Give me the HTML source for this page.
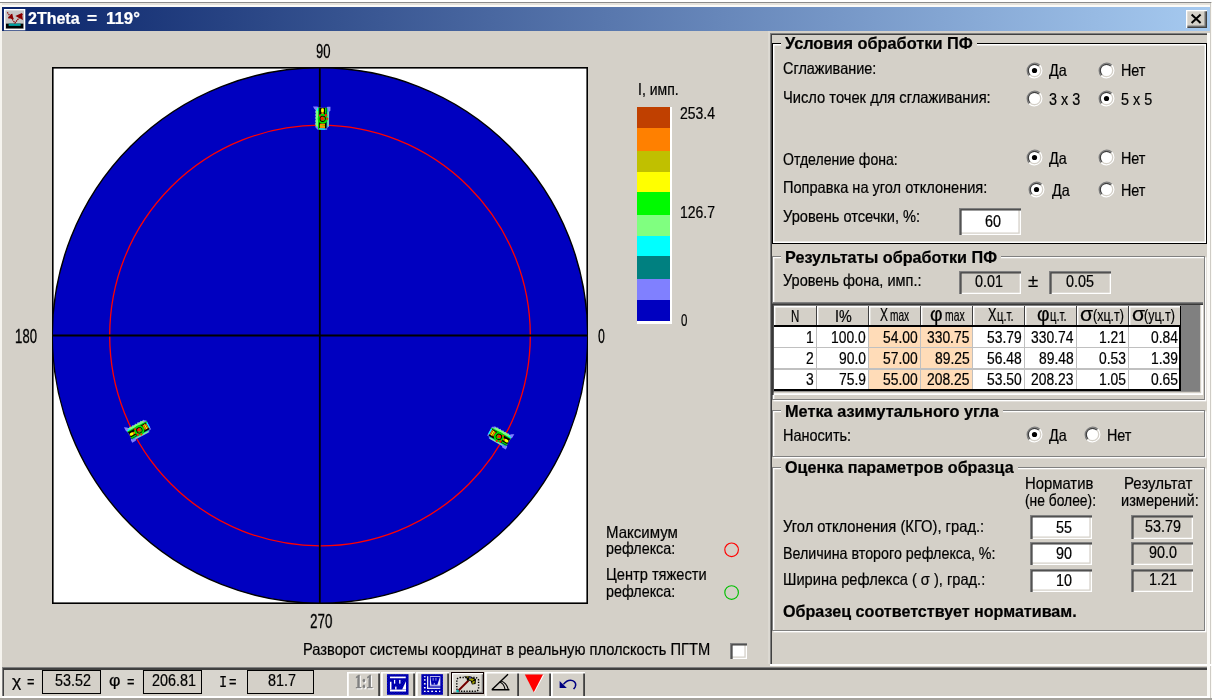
<!DOCTYPE html>
<html><head><meta charset="utf-8"><title>2Theta</title>
<style>
html,body{margin:0;padding:0}
body{width:1212px;height:700px;overflow:hidden;background:#d4d0c8;position:relative;font-family:"Liberation Sans",sans-serif}
.t{position:absolute;white-space:pre;line-height:1;transform-origin:0 0;display:block;-webkit-text-stroke-width:0.22px}
svg{position:absolute;overflow:visible}
#w{position:absolute;left:0;top:0;width:1212px;height:700px;will-change:transform}
</style></head><body><div id="w">
<div style="position:absolute;left:0.00px;top:0.00px;width:1212.00px;height:1.70px;background:#ffffff"></div>
<div style="position:absolute;left:0.00px;top:1.70px;width:1210.60px;height:1.40px;background:#8c8c8c"></div>
<div style="position:absolute;left:0.00px;top:3.10px;width:1212.00px;height:1.50px;background:#e6e3dc"></div>
<div style="position:absolute;left:0.00px;top:4.50px;width:1212.00px;height:2.40px;background:#fcfbf8"></div>
<div style="position:absolute;left:0.00px;top:3.10px;width:1.70px;height:697.00px;background:#f6f4ef"></div>
<div style="position:absolute;left:1209.60px;top:3.10px;width:1.00px;height:697.00px;background:#cfccc5"></div>
<div style="position:absolute;left:1210.60px;top:3.10px;width:1.40px;height:697.00px;background:#fbfaf7"></div>
<div style="position:absolute;left:1.70px;top:6.90px;width:1207.90px;height:23.90px;background:linear-gradient(90deg,#0a246a 0%,#a6caf0 100%)"></div>
<span class="t" style="left:28.30px;top:10.02px;font-size:16.40px;font-family:'Liberation Sans', sans-serif;font-weight:bold;color:#fff;transform:scale(0.9761,1.0000);">2Theta</span>
<span class="t" style="left:86.80px;top:10.02px;font-size:16.40px;font-family:'Liberation Sans', sans-serif;font-weight:bold;color:#fff;transform:scale(1.0546,1.0000);">=</span>
<span class="t" style="left:106.30px;top:10.02px;font-size:16.40px;font-family:'Liberation Sans', sans-serif;font-weight:bold;color:#fff;transform:scale(1.0297,1.0000);">119°</span>
<svg style="left:4.4px;top:8.5px" width="21.3" height="21.3" viewBox="0 0 16 16">
<rect x="0" y="0" width="16" height="16" fill="#fff"/><rect x="1" y="1" width="14" height="14" fill="#c6c6c6"/>
<rect x="1.5" y="11" width="13" height="3.6" fill="#000"/><rect x="3.5" y="11" width="9" height="1.7" fill="#00a0a0"/>
<path d="M2.5 2.5 L8.2 10.5 L14 3.5" stroke="#8b0000" stroke-width="0.9" fill="none" stroke-dasharray="1.1 0.5"/>
<path d="M3.2 6.5 L6.2 6.5 L5.6 3.8 M4.6 5.2 l2.4 2.2 M10 5.3 l3 -1.4 l0.4 3.2 z" stroke="#8b0000" stroke-width="1.3" fill="#8b0000"/>
</svg>
<div style="position:absolute;left:1185.60px;top:10.00px;width:21.00px;height:18.00px;background:#d4d0c8;box-shadow:inset 1.3px 1.3px 0 #fff, inset -1.3px -1.3px 0 #404040, inset -2.6px -2.6px 0 #808080"></div>
<svg style="left:1185.6px;top:10px" width="21" height="18"><path d="M5.6 4.6 L14.6 13 M14.6 4.6 L5.6 13" stroke="#000" stroke-width="2.0" fill="none"/></svg>
<svg style="left:0;top:0" width="1212" height="700">
<rect x="52.8" y="67.8" width="534.4" height="535.4" fill="#fff" stroke="#000" stroke-width="1.6"/>
<defs><clipPath id="pc"><rect x="52.0" y="67.0" width="536.0" height="537.0"/></clipPath></defs>
<circle cx="320.0" cy="335.5" r="267.7" fill="#0000c0" stroke="#000" stroke-width="1.4" clip-path="url(#pc)"/>
<circle cx="320.0" cy="335.5" r="210.3" fill="none" stroke="#ff0000" stroke-width="1.3"/>
<rect x="318.9" y="67.0" width="1.8" height="537.0" fill="#000"/>
<rect x="52.0" y="334.7" width="536.0" height="1.6" fill="#000"/>
<g transform="translate(499.2 436.6) rotate(119.25) scale(1,1)"><path d="M-9.5 -12 L-5 -12 L-4 -11 L4 -11 L5 -12 L8 -12 L8 -8 L6.8 -7 L6.8 8 L5 9 L5 11 L-5 11 L-6 9.5 L-7 8.5 L-6 7 L-7.6 5.5 L-6 4 L-7.6 2.5 L-6 1 L-7.6 -0.5 L-6 -2 L-7.6 -3.5 L-6 -5 L-7.6 -6.5 L-6.4 -8 L-8 -9.5 Z" fill="#8080ff"/>
<rect x="-6.6" y="-9" width="2.4" height="17" fill="#80ff80"/>
<rect x="-5.4" y="-10.5" width="1.6" height="3" fill="#00ffff"/>
<rect x="-4.2" y="-11" width="1.4" height="22" fill="#00e000"/>
<rect x="4.2" y="-10.5" width="1.3" height="19" fill="#00c0c0"/>
<rect x="5.3" y="-7" width="1" height="14" fill="#80ff80"/>
<rect x="-3.2" y="-10.8" width="7.6" height="20.6" fill="#000"/>
<rect x="2.6" y="-10.8" width="1.4" height="6" fill="#00e000"/>
<rect x="-1.3" y="-10.4" width="2.8" height="4.2" rx="1.2" fill="#ffff00"/>
<rect x="-0.9" y="-6.4" width="2.2" height="2.6" fill="#ff8000"/>
<circle cx="0.4" cy="0.2" r="4.1" fill="none" stroke="#00e000" stroke-width="1.9"/>
<circle cx="0.4" cy="0.2" r="2.3" fill="#ff2000"/>
<path d="M0.6 -1.2 A1.6 1.6 0 1 1 -0.8 1" stroke="#00e000" stroke-width="0.9" fill="none"/>
<circle cx="3.6" cy="-3.4" r="1.2" fill="#ff2000"/><circle cx="-2.6" cy="-3" r="1" fill="#ff2000"/><circle cx="5" cy="0" r="1" fill="#ff2000"/>
<rect x="-2.4" y="5.2" width="5.2" height="1.4" fill="#ff8000"/>
<rect x="-2.4" y="6.8" width="5.2" height="1.3" fill="#ffff00"/>
<rect x="-2.4" y="8.3" width="5.2" height="1.2" fill="#ff8000"/>
<rect x="-3" y="9.8" width="6" height="1.2" fill="#00ffff"/></g>
<g transform="translate(139.0 430.0) rotate(-118.25) scale(-1,1)"><path d="M-9.5 -12 L-5 -12 L-4 -11 L4 -11 L5 -12 L8 -12 L8 -8 L6.8 -7 L6.8 8 L5 9 L5 11 L-5 11 L-6 9.5 L-7 8.5 L-6 7 L-7.6 5.5 L-6 4 L-7.6 2.5 L-6 1 L-7.6 -0.5 L-6 -2 L-7.6 -3.5 L-6 -5 L-7.6 -6.5 L-6.4 -8 L-8 -9.5 Z" fill="#8080ff"/>
<rect x="-6.6" y="-9" width="2.4" height="17" fill="#80ff80"/>
<rect x="-5.4" y="-10.5" width="1.6" height="3" fill="#00ffff"/>
<rect x="-4.2" y="-11" width="1.4" height="22" fill="#00e000"/>
<rect x="4.2" y="-10.5" width="1.3" height="19" fill="#00c0c0"/>
<rect x="5.3" y="-7" width="1" height="14" fill="#80ff80"/>
<rect x="-3.2" y="-10.8" width="7.6" height="20.6" fill="#000"/>
<rect x="2.6" y="-10.8" width="1.4" height="6" fill="#00e000"/>
<rect x="-1.3" y="-10.4" width="2.8" height="4.2" rx="1.2" fill="#ffff00"/>
<rect x="-0.9" y="-6.4" width="2.2" height="2.6" fill="#ff8000"/>
<circle cx="0.4" cy="0.2" r="4.1" fill="none" stroke="#00e000" stroke-width="1.9"/>
<circle cx="0.4" cy="0.2" r="2.3" fill="#ff2000"/>
<path d="M0.6 -1.2 A1.6 1.6 0 1 1 -0.8 1" stroke="#00e000" stroke-width="0.9" fill="none"/>
<circle cx="3.6" cy="-3.4" r="1.2" fill="#ff2000"/><circle cx="-2.6" cy="-3" r="1" fill="#ff2000"/><circle cx="5" cy="0" r="1" fill="#ff2000"/>
<rect x="-2.4" y="5.2" width="5.2" height="1.4" fill="#ff8000"/>
<rect x="-2.4" y="6.8" width="5.2" height="1.3" fill="#ffff00"/>
<rect x="-2.4" y="8.3" width="5.2" height="1.2" fill="#ff8000"/>
<rect x="-3" y="9.8" width="6" height="1.2" fill="#00ffff"/></g>
<rect x="52.0" y="334.7" width="536.0" height="1.6" fill="#000"/>
<g transform="translate(322.3 118.6) rotate(0.75) scale(1,1)"><path d="M-9.5 -12 L-5 -12 L-4 -11 L4 -11 L5 -12 L8 -12 L8 -8 L6.8 -7 L6.8 8 L5 9 L5 11 L-5 11 L-6 9.5 L-7 8.5 L-6 7 L-7.6 5.5 L-6 4 L-7.6 2.5 L-6 1 L-7.6 -0.5 L-6 -2 L-7.6 -3.5 L-6 -5 L-7.6 -6.5 L-6.4 -8 L-8 -9.5 Z" fill="#8080ff"/>
<rect x="-6.6" y="-9" width="2.4" height="17" fill="#80ff80"/>
<rect x="-5.4" y="-10.5" width="1.6" height="3" fill="#00ffff"/>
<rect x="-4.2" y="-11" width="1.4" height="22" fill="#00e000"/>
<rect x="4.2" y="-10.5" width="1.3" height="19" fill="#00c0c0"/>
<rect x="5.3" y="-7" width="1" height="14" fill="#80ff80"/>
<rect x="-3.2" y="-10.8" width="7.6" height="20.6" fill="#000"/>
<rect x="2.6" y="-10.8" width="1.4" height="6" fill="#00e000"/>
<rect x="-1.3" y="-10.4" width="2.8" height="4.2" rx="1.2" fill="#ffff00"/>
<rect x="-0.9" y="-6.4" width="2.2" height="2.6" fill="#ff8000"/>
<circle cx="0.4" cy="0.2" r="4.1" fill="none" stroke="#00e000" stroke-width="1.9"/>
<circle cx="0.4" cy="0.2" r="2.3" fill="#ff2000"/>
<path d="M0.6 -1.2 A1.6 1.6 0 1 1 -0.8 1" stroke="#00e000" stroke-width="0.9" fill="none"/>
<circle cx="3.6" cy="-3.4" r="1.2" fill="#ff2000"/><circle cx="-2.6" cy="-3" r="1" fill="#ff2000"/><circle cx="5" cy="0" r="1" fill="#ff2000"/>
<rect x="-2.4" y="5.2" width="5.2" height="1.4" fill="#ff8000"/>
<rect x="-2.4" y="6.8" width="5.2" height="1.3" fill="#ffff00"/>
<rect x="-2.4" y="8.3" width="5.2" height="1.2" fill="#ff8000"/>
<rect x="-3" y="9.8" width="6" height="1.2" fill="#00ffff"/></g>
</svg>
<span class="t" style="left:316.00px;top:40.55px;font-size:20.50px;font-family:'Liberation Sans', sans-serif;color:#000;transform:scale(0.6271,1.0000);-webkit-text-stroke:0.3px #000">90</span>
<span class="t" style="left:15.40px;top:325.85px;font-size:20.50px;font-family:'Liberation Sans', sans-serif;color:#000;transform:scale(0.6461,1.0000);-webkit-text-stroke:0.3px #000">180</span>
<span class="t" style="left:597.50px;top:325.85px;font-size:20.50px;font-family:'Liberation Sans', sans-serif;color:#000;transform:scale(0.5964,1.0000);-webkit-text-stroke:0.3px #000">0</span>
<span class="t" style="left:309.60px;top:610.55px;font-size:20.50px;font-family:'Liberation Sans', sans-serif;color:#000;transform:scale(0.6549,1.0000);-webkit-text-stroke:0.3px #000">270</span>
<span class="t" style="left:637.70px;top:81.13px;font-size:16.50px;font-family:'Liberation Sans', sans-serif;color:#000;transform:scale(0.8488,1.0000);">I, имп.</span>
<div style="position:absolute;left:636.80px;top:107.00px;width:34.90px;height:216.70px;background:#fff"></div>
<div style="position:absolute;left:636.80px;top:107.00px;width:33.50px;height:21.05px;background:#c04000"></div>
<div style="position:absolute;left:636.80px;top:128.00px;width:33.50px;height:23.05px;background:#ff8000"></div>
<div style="position:absolute;left:636.80px;top:151.00px;width:33.50px;height:21.05px;background:#c0c000"></div>
<div style="position:absolute;left:636.80px;top:172.00px;width:33.50px;height:20.45px;background:#ffff00"></div>
<div style="position:absolute;left:636.80px;top:192.40px;width:33.50px;height:22.55px;background:#00fa00"></div>
<div style="position:absolute;left:636.80px;top:214.90px;width:33.50px;height:21.25px;background:#80ff80"></div>
<div style="position:absolute;left:636.80px;top:236.10px;width:33.50px;height:20.35px;background:#00ffff"></div>
<div style="position:absolute;left:636.80px;top:256.40px;width:33.50px;height:22.15px;background:#008080"></div>
<div style="position:absolute;left:636.80px;top:278.50px;width:33.50px;height:21.45px;background:#8080ff"></div>
<div style="position:absolute;left:636.80px;top:299.90px;width:33.50px;height:21.45px;background:#0000c0"></div>
<span class="t" style="left:680.00px;top:105.23px;font-size:16.50px;font-family:'Liberation Sans', sans-serif;color:#000;transform:scale(0.8476,1.0000);">253.4</span>
<span class="t" style="left:680.00px;top:203.73px;font-size:16.50px;font-family:'Liberation Sans', sans-serif;color:#000;transform:scale(0.8476,1.0000);">126.7</span>
<span class="t" style="left:681.00px;top:311.63px;font-size:16.50px;font-family:'Liberation Sans', sans-serif;color:#000;transform:scale(0.6974,1.0000);">0</span>
<span class="t" style="left:605.60px;top:523.53px;font-size:16.50px;font-family:'Liberation Sans', sans-serif;color:#000;transform:scale(0.9098,1.0000);">Максимум</span>
<span class="t" style="left:605.60px;top:540.33px;font-size:16.50px;font-family:'Liberation Sans', sans-serif;color:#000;transform:scale(0.8661,1.0000);">рефлекса:</span>
<span class="t" style="left:605.60px;top:565.53px;font-size:16.50px;font-family:'Liberation Sans', sans-serif;color:#000;transform:scale(0.8860,1.0000);">Центр тяжести</span>
<span class="t" style="left:605.60px;top:582.63px;font-size:16.50px;font-family:'Liberation Sans', sans-serif;color:#000;transform:scale(0.8661,1.0000);">рефлекса:</span>
<svg style="left:0;top:0" width="1212" height="700"><circle cx="731.6" cy="549.8" r="6.8" fill="none" stroke="#ff0000" stroke-width="1.15"/><circle cx="731.6" cy="592.5" r="6.8" fill="none" stroke="#00c000" stroke-width="1.15"/></svg>
<span class="t" style="left:303.00px;top:641.33px;font-size:16.50px;font-family:'Liberation Sans', sans-serif;color:#000;transform:scale(0.8901,1.0000);">Разворот системы координат в реальную плолскость ПГТМ</span>
<div style="position:absolute;left:730.00px;top:642.70px;width:17.00px;height:16.50px;background:#fff;box-shadow:inset 1.3px 1.3px 0 #808080, inset 2.6px 2.6px 0 #404040, inset -1.3px -1.3px 0 #fff, inset -2.6px -2.6px 0 #d4d0c8"></div>
<div style="position:absolute;left:770.00px;top:32.60px;width:437.40px;height:1.40px;background:#808080"></div>
<div style="position:absolute;left:771.40px;top:34.00px;width:436.00px;height:1.20px;background:#404040"></div>
<div style="position:absolute;left:770.00px;top:32.60px;width:1.10px;height:631.60px;background:#808080"></div>
<div style="position:absolute;left:771.10px;top:34.00px;width:1.40px;height:630.20px;background:#404040"></div>
<div style="position:absolute;left:770.00px;top:664.20px;width:669.60px;height:1.90px;background:#fff"></div>
<div style="position:absolute;left:1207.40px;top:32.60px;width:2.20px;height:665.00px;background:#fbfaf7"></div>
<div style="position:absolute;left:768.30px;top:31.00px;width:1.70px;height:633.00px;background:#dcd9d2"></div>
<div style="position:absolute;left:771.70px;top:42.90px;width:434.90px;height:201.10px;border:1.6px solid #000;box-sizing:border-box;box-shadow:inset 1.4px 1.4px 0 #fff, inset -1.4px -1.4px 0 #fff"></div>
<div style="position:absolute;left:781.30px;top:40.90px;width:195.40px;height:6.00px;background:#d4d0c8"></div>
<span class="t" style="left:785.00px;top:35.33px;font-size:16.50px;font-family:'Liberation Sans', sans-serif;font-weight:bold;color:#000;transform:scale(0.9898,1.0000);">Условия обработки ПФ</span>
<div style="position:absolute;left:772.00px;top:256.20px;width:433.40px;height:143.80px;border:1.35px solid #808080;box-sizing:border-box;box-shadow:1.35px 1.35px 0 #fff, inset 1.35px 1.35px 0 #fff"></div>
<div style="position:absolute;left:781.30px;top:254.20px;width:219.70px;height:6.00px;background:#d4d0c8"></div>
<span class="t" style="left:785.00px;top:248.63px;font-size:16.50px;font-family:'Liberation Sans', sans-serif;font-weight:bold;color:#000;transform:scale(0.9810,1.0000);">Результаты обработки ПФ</span>
<div style="position:absolute;left:772.00px;top:410.40px;width:433.40px;height:46.80px;border:1.35px solid #808080;box-sizing:border-box;box-shadow:1.35px 1.35px 0 #fff, inset 1.35px 1.35px 0 #fff"></div>
<div style="position:absolute;left:781.30px;top:408.40px;width:221.50px;height:6.00px;background:#d4d0c8"></div>
<span class="t" style="left:785.00px;top:402.83px;font-size:16.50px;font-family:'Liberation Sans', sans-serif;font-weight:bold;color:#000;transform:scale(0.9878,1.0000);">Метка азимутального угла</span>
<div style="position:absolute;left:772.00px;top:466.60px;width:433.40px;height:164.90px;border:1.35px solid #808080;box-sizing:border-box;box-shadow:1.35px 1.35px 0 #fff, inset 1.35px 1.35px 0 #fff"></div>
<div style="position:absolute;left:781.30px;top:464.60px;width:236.40px;height:6.00px;background:#d4d0c8"></div>
<span class="t" style="left:785.00px;top:459.03px;font-size:16.50px;font-family:'Liberation Sans', sans-serif;font-weight:bold;color:#000;transform:scale(0.9768,1.0000);">Оценка параметров образца</span>
<span class="t" style="left:783.30px;top:59.73px;font-size:16.50px;font-family:'Liberation Sans', sans-serif;color:#000;transform:scale(0.8762,1.0000);">Сглаживание:</span>
<span class="t" style="left:783.30px;top:88.63px;font-size:16.50px;font-family:'Liberation Sans', sans-serif;color:#000;transform:scale(0.8909,1.0000);">Число точек для сглаживания:</span>
<span class="t" style="left:783.30px;top:150.53px;font-size:16.50px;font-family:'Liberation Sans', sans-serif;color:#000;transform:scale(0.8520,1.0000);">Отделение фона:</span>
<span class="t" style="left:783.30px;top:179.43px;font-size:16.50px;font-family:'Liberation Sans', sans-serif;color:#000;transform:scale(0.8839,1.0000);">Поправка на угол отклонения:</span>
<span class="t" style="left:783.30px;top:208.43px;font-size:16.50px;font-family:'Liberation Sans', sans-serif;color:#000;transform:scale(0.8864,1.0000);">Уровень отсечки, %:</span>
<svg style="left:1025.60px;top:61.50px" width="17" height="17" viewBox="0 0 17 17"><circle cx="8.5" cy="8.5" r="7" fill="#fff"/><path d="M3.2 13.8 A7.5 7.5 0 0 1 13.8 3.2" stroke="#808080" stroke-width="1.3" fill="none"/><path d="M4.1 12.9 A6.2 6.2 0 0 1 12.9 4.1" stroke="#404040" stroke-width="1.3" fill="none"/><path d="M13.8 3.2 A7.5 7.5 0 0 1 3.2 13.8" stroke="#fff" stroke-width="1.3" fill="none"/><path d="M12.9 4.1 A6.2 6.2 0 0 1 4.1 12.9" stroke="#d4d0c8" stroke-width="1.3" fill="none"/><circle cx="8.5" cy="8.5" r="2.6" fill="#000"/></svg>
<svg style="left:1097.50px;top:61.50px" width="17" height="17" viewBox="0 0 17 17"><circle cx="8.5" cy="8.5" r="7" fill="#fff"/><path d="M3.2 13.8 A7.5 7.5 0 0 1 13.8 3.2" stroke="#808080" stroke-width="1.3" fill="none"/><path d="M4.1 12.9 A6.2 6.2 0 0 1 12.9 4.1" stroke="#404040" stroke-width="1.3" fill="none"/><path d="M13.8 3.2 A7.5 7.5 0 0 1 3.2 13.8" stroke="#fff" stroke-width="1.3" fill="none"/><path d="M12.9 4.1 A6.2 6.2 0 0 1 4.1 12.9" stroke="#d4d0c8" stroke-width="1.3" fill="none"/></svg>
<span class="t" style="left:1049.40px;top:61.63px;font-size:16.50px;font-family:'Liberation Sans', sans-serif;color:#000;transform:scale(0.8700,1.0000);">Да</span>
<span class="t" style="left:1121.30px;top:61.63px;font-size:16.50px;font-family:'Liberation Sans', sans-serif;color:#000;transform:scale(0.8700,1.0000);">Нет</span>
<svg style="left:1025.60px;top:90.40px" width="17" height="17" viewBox="0 0 17 17"><circle cx="8.5" cy="8.5" r="7" fill="#fff"/><path d="M3.2 13.8 A7.5 7.5 0 0 1 13.8 3.2" stroke="#808080" stroke-width="1.3" fill="none"/><path d="M4.1 12.9 A6.2 6.2 0 0 1 12.9 4.1" stroke="#404040" stroke-width="1.3" fill="none"/><path d="M13.8 3.2 A7.5 7.5 0 0 1 3.2 13.8" stroke="#fff" stroke-width="1.3" fill="none"/><path d="M12.9 4.1 A6.2 6.2 0 0 1 4.1 12.9" stroke="#d4d0c8" stroke-width="1.3" fill="none"/></svg>
<svg style="left:1097.50px;top:90.40px" width="17" height="17" viewBox="0 0 17 17"><circle cx="8.5" cy="8.5" r="7" fill="#fff"/><path d="M3.2 13.8 A7.5 7.5 0 0 1 13.8 3.2" stroke="#808080" stroke-width="1.3" fill="none"/><path d="M4.1 12.9 A6.2 6.2 0 0 1 12.9 4.1" stroke="#404040" stroke-width="1.3" fill="none"/><path d="M13.8 3.2 A7.5 7.5 0 0 1 3.2 13.8" stroke="#fff" stroke-width="1.3" fill="none"/><path d="M12.9 4.1 A6.2 6.2 0 0 1 4.1 12.9" stroke="#d4d0c8" stroke-width="1.3" fill="none"/><circle cx="8.5" cy="8.5" r="2.6" fill="#000"/></svg>
<span class="t" style="left:1049.40px;top:91.43px;font-size:16.50px;font-family:'Liberation Sans', sans-serif;color:#000;transform:scale(0.8700,1.0000);">3 x 3</span>
<span class="t" style="left:1121.30px;top:91.43px;font-size:16.50px;font-family:'Liberation Sans', sans-serif;color:#000;transform:scale(0.8700,1.0000);">5 x 5</span>
<svg style="left:1025.60px;top:149.10px" width="17" height="17" viewBox="0 0 17 17"><circle cx="8.5" cy="8.5" r="7" fill="#fff"/><path d="M3.2 13.8 A7.5 7.5 0 0 1 13.8 3.2" stroke="#808080" stroke-width="1.3" fill="none"/><path d="M4.1 12.9 A6.2 6.2 0 0 1 12.9 4.1" stroke="#404040" stroke-width="1.3" fill="none"/><path d="M13.8 3.2 A7.5 7.5 0 0 1 3.2 13.8" stroke="#fff" stroke-width="1.3" fill="none"/><path d="M12.9 4.1 A6.2 6.2 0 0 1 4.1 12.9" stroke="#d4d0c8" stroke-width="1.3" fill="none"/><circle cx="8.5" cy="8.5" r="2.6" fill="#000"/></svg>
<svg style="left:1097.50px;top:149.10px" width="17" height="17" viewBox="0 0 17 17"><circle cx="8.5" cy="8.5" r="7" fill="#fff"/><path d="M3.2 13.8 A7.5 7.5 0 0 1 13.8 3.2" stroke="#808080" stroke-width="1.3" fill="none"/><path d="M4.1 12.9 A6.2 6.2 0 0 1 12.9 4.1" stroke="#404040" stroke-width="1.3" fill="none"/><path d="M13.8 3.2 A7.5 7.5 0 0 1 3.2 13.8" stroke="#fff" stroke-width="1.3" fill="none"/><path d="M12.9 4.1 A6.2 6.2 0 0 1 4.1 12.9" stroke="#d4d0c8" stroke-width="1.3" fill="none"/></svg>
<span class="t" style="left:1049.40px;top:149.63px;font-size:16.50px;font-family:'Liberation Sans', sans-serif;color:#000;transform:scale(0.8700,1.0000);">Да</span>
<span class="t" style="left:1121.30px;top:149.63px;font-size:16.50px;font-family:'Liberation Sans', sans-serif;color:#000;transform:scale(0.8700,1.0000);">Нет</span>
<svg style="left:1028.20px;top:181.20px" width="17" height="17" viewBox="0 0 17 17"><circle cx="8.5" cy="8.5" r="7" fill="#fff"/><path d="M3.2 13.8 A7.5 7.5 0 0 1 13.8 3.2" stroke="#808080" stroke-width="1.3" fill="none"/><path d="M4.1 12.9 A6.2 6.2 0 0 1 12.9 4.1" stroke="#404040" stroke-width="1.3" fill="none"/><path d="M13.8 3.2 A7.5 7.5 0 0 1 3.2 13.8" stroke="#fff" stroke-width="1.3" fill="none"/><path d="M12.9 4.1 A6.2 6.2 0 0 1 4.1 12.9" stroke="#d4d0c8" stroke-width="1.3" fill="none"/><circle cx="8.5" cy="8.5" r="2.6" fill="#000"/></svg>
<svg style="left:1097.50px;top:181.20px" width="17" height="17" viewBox="0 0 17 17"><circle cx="8.5" cy="8.5" r="7" fill="#fff"/><path d="M3.2 13.8 A7.5 7.5 0 0 1 13.8 3.2" stroke="#808080" stroke-width="1.3" fill="none"/><path d="M4.1 12.9 A6.2 6.2 0 0 1 12.9 4.1" stroke="#404040" stroke-width="1.3" fill="none"/><path d="M13.8 3.2 A7.5 7.5 0 0 1 3.2 13.8" stroke="#fff" stroke-width="1.3" fill="none"/><path d="M12.9 4.1 A6.2 6.2 0 0 1 4.1 12.9" stroke="#d4d0c8" stroke-width="1.3" fill="none"/></svg>
<span class="t" style="left:1052.00px;top:181.53px;font-size:16.50px;font-family:'Liberation Sans', sans-serif;color:#000;transform:scale(0.8700,1.0000);">Да</span>
<span class="t" style="left:1121.30px;top:181.53px;font-size:16.50px;font-family:'Liberation Sans', sans-serif;color:#000;transform:scale(0.8700,1.0000);">Нет</span>
<div style="position:absolute;left:959.00px;top:208.40px;width:61.50px;height:27.00px;background:#fff;box-shadow:inset 1.3px 1.3px 0 #808080, inset 2.6px 2.6px 0 #404040, inset -1.3px -1.3px 0 #fff, inset -2.6px -2.6px 0 #d4d0c8"></div>
<span class="t" style="left:984.77px;top:212.83px;font-size:16.50px;font-family:'Liberation Sans', sans-serif;color:#000;transform:scale(0.8700,1.0000);">60</span>
<span class="t" style="left:783.30px;top:271.73px;font-size:16.50px;font-family:'Liberation Sans', sans-serif;color:#000;transform:scale(0.8821,1.0000);">Уровень фона, имп.:</span>
<div style="position:absolute;left:959.00px;top:270.80px;width:61.50px;height:23.40px;background:#d4d0c8;box-shadow:inset 1.3px 1.3px 0 #808080, inset 2.6px 2.6px 0 #404040, inset -1.3px -1.3px 0 #fff, inset -2.6px -2.6px 0 #d4d0c8"></div>
<span class="t" style="left:975.28px;top:272.83px;font-size:16.50px;font-family:'Liberation Sans', sans-serif;color:#000;transform:scale(0.8700,1.0000);">0.01</span>
<span class="t" style="left:1028.00px;top:272.26px;font-size:18.00px;font-family:'Liberation Sans', sans-serif;color:#000;transform:scale(1.0325,1.0000);">±</span>
<div style="position:absolute;left:1048.50px;top:270.80px;width:62.10px;height:23.40px;background:#d4d0c8;box-shadow:inset 1.3px 1.3px 0 #808080, inset 2.6px 2.6px 0 #404040, inset -1.3px -1.3px 0 #fff, inset -2.6px -2.6px 0 #d4d0c8"></div>
<span class="t" style="left:1066.08px;top:272.83px;font-size:16.50px;font-family:'Liberation Sans', sans-serif;color:#000;transform:scale(0.8700,1.0000);">0.05</span>
<div style="position:absolute;left:772.00px;top:302.40px;width:430.70px;height:92.60px;background:#808080;box-shadow:inset 0 1.4px 0 #808080, inset 1.6px 3.0px 0 #383838, inset -1.8px -1.8px 0 #fff, inset -3px -3.2px 0 #d4d0c8"></div>
<div style="position:absolute;left:774.20px;top:305.60px;width:406.80px;height:85.40px;background:#000"></div>
<div style="position:absolute;left:774.20px;top:305.60px;width:405.30px;height:19.90px;background:#404040"></div>
<div style="position:absolute;left:774.20px;top:327.00px;width:405.20px;height:62.40px;background:#fff"></div>
<div style="position:absolute;left:868.90px;top:327.00px;width:104.00px;height:62.40px;background:#ffdcb8"></div>
<div style="position:absolute;left:815.60px;top:327.00px;width:1.30px;height:62.40px;background:#c0c0c0"></div>
<div style="position:absolute;left:867.60px;top:327.00px;width:1.30px;height:62.40px;background:#c0c0c0"></div>
<div style="position:absolute;left:919.60px;top:327.00px;width:1.30px;height:62.40px;background:#c0c0c0"></div>
<div style="position:absolute;left:971.60px;top:327.00px;width:1.30px;height:62.40px;background:#c0c0c0"></div>
<div style="position:absolute;left:1023.60px;top:327.00px;width:1.30px;height:62.40px;background:#c0c0c0"></div>
<div style="position:absolute;left:1075.60px;top:327.00px;width:1.30px;height:62.40px;background:#c0c0c0"></div>
<div style="position:absolute;left:1127.60px;top:327.00px;width:1.30px;height:62.40px;background:#c0c0c0"></div>
<div style="position:absolute;left:774.20px;top:347.00px;width:405.20px;height:1.30px;background:#c0c0c0"></div>
<div style="position:absolute;left:774.20px;top:368.30px;width:405.20px;height:1.30px;background:#c0c0c0"></div>
<div style="position:absolute;left:774.20px;top:305.60px;width:41.50px;height:19.90px;background:#d4d0c8;box-shadow:inset 1.4px 1.6px 0 #fff"></div>
<div style="position:absolute;left:816.90px;top:305.60px;width:50.80px;height:19.90px;background:#d4d0c8;box-shadow:inset 1.4px 1.6px 0 #fff"></div>
<div style="position:absolute;left:868.90px;top:305.60px;width:50.80px;height:19.90px;background:#d4d0c8;box-shadow:inset 1.4px 1.6px 0 #fff"></div>
<div style="position:absolute;left:920.90px;top:305.60px;width:50.80px;height:19.90px;background:#d4d0c8;box-shadow:inset 1.4px 1.6px 0 #fff"></div>
<div style="position:absolute;left:972.90px;top:305.60px;width:50.80px;height:19.90px;background:#d4d0c8;box-shadow:inset 1.4px 1.6px 0 #fff"></div>
<div style="position:absolute;left:1024.90px;top:305.60px;width:50.80px;height:19.90px;background:#d4d0c8;box-shadow:inset 1.4px 1.6px 0 #fff"></div>
<div style="position:absolute;left:1076.90px;top:305.60px;width:50.80px;height:19.90px;background:#d4d0c8;box-shadow:inset 1.4px 1.6px 0 #fff"></div>
<div style="position:absolute;left:1128.90px;top:305.60px;width:50.90px;height:19.90px;background:#d4d0c8;box-shadow:inset 1.4px 1.6px 0 #fff"></div>
<span class="t" style="left:790.70px;top:307.63px;font-size:16.50px;font-family:'Liberation Sans', sans-serif;color:#000;transform:scale(0.6965,1.0000);">N</span>
<span class="t" style="left:834.52px;top:307.63px;font-size:16.50px;font-family:'Liberation Sans', sans-serif;color:#000;transform:scale(0.8700,1.0000);">I%</span>
<span class="t" style="left:879.90px;top:305.72px;font-size:18.40px;font-family:'Liberation Sans', sans-serif;color:#000;transform:scale(0.6437,1.0000);">X</span>
<span class="t" style="left:890.40px;top:307.33px;font-size:16.50px;font-family:'Liberation Sans', sans-serif;color:#000;transform:scale(0.6159,1.0000);">max</span>
<span class="t" style="left:930.00px;top:304.79px;font-size:19.50px;font-family:'Liberation Sans', sans-serif;color:#000;transform:scale(0.9965,1.0000);">φ</span>
<span class="t" style="left:944.80px;top:307.33px;font-size:16.50px;font-family:'Liberation Sans', sans-serif;color:#000;transform:scale(0.6288,1.0000);">max</span>
<span class="t" style="left:987.50px;top:305.72px;font-size:18.40px;font-family:'Liberation Sans', sans-serif;color:#000;transform:scale(0.6926,1.0000);">X</span>
<span class="t" style="left:996.70px;top:307.33px;font-size:16.50px;font-family:'Liberation Sans', sans-serif;color:#000;transform:scale(0.6777,1.0000);">ц.т.</span>
<span class="t" style="left:1036.50px;top:304.79px;font-size:19.50px;font-family:'Liberation Sans', sans-serif;color:#000;transform:scale(0.9965,1.0000);">φ</span>
<span class="t" style="left:1049.70px;top:307.33px;font-size:16.50px;font-family:'Liberation Sans', sans-serif;color:#000;transform:scale(0.6777,1.0000);">ц.т.</span>
<span class="t" style="left:1080.10px;top:304.96px;font-size:19.30px;font-family:'Liberation Sans', sans-serif;color:#000;transform:scale(1.0998,1.0000);">σ</span>
<span class="t" style="left:1092.60px;top:307.33px;font-size:16.50px;font-family:'Liberation Sans', sans-serif;color:#000;transform:scale(0.7592,1.0000);">(xц.т)</span>
<span class="t" style="left:1131.60px;top:304.96px;font-size:19.30px;font-family:'Liberation Sans', sans-serif;color:#000;transform:scale(1.0998,1.0000);">σ</span>
<span class="t" style="left:1144.10px;top:307.33px;font-size:16.50px;font-family:'Liberation Sans', sans-serif;color:#000;transform:scale(0.7592,1.0000);">(yц.т)</span>
<span class="t" style="left:805.79px;top:328.83px;font-size:16.50px;font-family:'Liberation Sans', sans-serif;color:#000;transform:scale(0.8400,1.0000);">1</span>
<span class="t" style="left:830.82px;top:328.83px;font-size:16.50px;font-family:'Liberation Sans', sans-serif;color:#000;transform:scale(0.8400,1.0000);">100.0</span>
<span class="t" style="left:882.82px;top:328.83px;font-size:16.50px;font-family:'Liberation Sans', sans-serif;color:#000;transform:scale(0.8400,1.0000);">54.00</span>
<span class="t" style="left:927.11px;top:328.83px;font-size:16.50px;font-family:'Liberation Sans', sans-serif;color:#000;transform:scale(0.8400,1.0000);">330.75</span>
<span class="t" style="left:986.82px;top:328.83px;font-size:16.50px;font-family:'Liberation Sans', sans-serif;color:#000;transform:scale(0.8400,1.0000);">53.79</span>
<span class="t" style="left:1031.11px;top:328.83px;font-size:16.50px;font-family:'Liberation Sans', sans-serif;color:#000;transform:scale(0.8400,1.0000);">330.74</span>
<span class="t" style="left:1098.52px;top:328.83px;font-size:16.50px;font-family:'Liberation Sans', sans-serif;color:#000;transform:scale(0.8400,1.0000);">1.21</span>
<span class="t" style="left:1150.62px;top:328.83px;font-size:16.50px;font-family:'Liberation Sans', sans-serif;color:#000;transform:scale(0.8400,1.0000);">0.84</span>
<span class="t" style="left:805.79px;top:350.03px;font-size:16.50px;font-family:'Liberation Sans', sans-serif;color:#000;transform:scale(0.8400,1.0000);">2</span>
<span class="t" style="left:838.52px;top:350.03px;font-size:16.50px;font-family:'Liberation Sans', sans-serif;color:#000;transform:scale(0.8400,1.0000);">90.0</span>
<span class="t" style="left:882.82px;top:350.03px;font-size:16.50px;font-family:'Liberation Sans', sans-serif;color:#000;transform:scale(0.8400,1.0000);">57.00</span>
<span class="t" style="left:934.82px;top:350.03px;font-size:16.50px;font-family:'Liberation Sans', sans-serif;color:#000;transform:scale(0.8400,1.0000);">89.25</span>
<span class="t" style="left:986.82px;top:350.03px;font-size:16.50px;font-family:'Liberation Sans', sans-serif;color:#000;transform:scale(0.8400,1.0000);">56.48</span>
<span class="t" style="left:1038.82px;top:350.03px;font-size:16.50px;font-family:'Liberation Sans', sans-serif;color:#000;transform:scale(0.8400,1.0000);">89.48</span>
<span class="t" style="left:1098.52px;top:350.03px;font-size:16.50px;font-family:'Liberation Sans', sans-serif;color:#000;transform:scale(0.8400,1.0000);">0.53</span>
<span class="t" style="left:1150.62px;top:350.03px;font-size:16.50px;font-family:'Liberation Sans', sans-serif;color:#000;transform:scale(0.8400,1.0000);">1.39</span>
<span class="t" style="left:805.79px;top:371.33px;font-size:16.50px;font-family:'Liberation Sans', sans-serif;color:#000;transform:scale(0.8400,1.0000);">3</span>
<span class="t" style="left:838.52px;top:371.33px;font-size:16.50px;font-family:'Liberation Sans', sans-serif;color:#000;transform:scale(0.8400,1.0000);">75.9</span>
<span class="t" style="left:882.82px;top:371.33px;font-size:16.50px;font-family:'Liberation Sans', sans-serif;color:#000;transform:scale(0.8400,1.0000);">55.00</span>
<span class="t" style="left:927.11px;top:371.33px;font-size:16.50px;font-family:'Liberation Sans', sans-serif;color:#000;transform:scale(0.8400,1.0000);">208.25</span>
<span class="t" style="left:986.82px;top:371.33px;font-size:16.50px;font-family:'Liberation Sans', sans-serif;color:#000;transform:scale(0.8400,1.0000);">53.50</span>
<span class="t" style="left:1031.11px;top:371.33px;font-size:16.50px;font-family:'Liberation Sans', sans-serif;color:#000;transform:scale(0.8400,1.0000);">208.23</span>
<span class="t" style="left:1098.52px;top:371.33px;font-size:16.50px;font-family:'Liberation Sans', sans-serif;color:#000;transform:scale(0.8400,1.0000);">1.05</span>
<span class="t" style="left:1150.62px;top:371.33px;font-size:16.50px;font-family:'Liberation Sans', sans-serif;color:#000;transform:scale(0.8400,1.0000);">0.65</span>
<span class="t" style="left:783.30px;top:427.03px;font-size:16.50px;font-family:'Liberation Sans', sans-serif;color:#000;transform:scale(0.8777,1.0000);">Наносить:</span>
<svg style="left:1025.60px;top:425.90px" width="17" height="17" viewBox="0 0 17 17"><circle cx="8.5" cy="8.5" r="7" fill="#fff"/><path d="M3.2 13.8 A7.5 7.5 0 0 1 13.8 3.2" stroke="#808080" stroke-width="1.3" fill="none"/><path d="M4.1 12.9 A6.2 6.2 0 0 1 12.9 4.1" stroke="#404040" stroke-width="1.3" fill="none"/><path d="M13.8 3.2 A7.5 7.5 0 0 1 3.2 13.8" stroke="#fff" stroke-width="1.3" fill="none"/><path d="M12.9 4.1 A6.2 6.2 0 0 1 4.1 12.9" stroke="#d4d0c8" stroke-width="1.3" fill="none"/><circle cx="8.5" cy="8.5" r="2.6" fill="#000"/></svg>
<svg style="left:1083.80px;top:425.90px" width="17" height="17" viewBox="0 0 17 17"><circle cx="8.5" cy="8.5" r="7" fill="#fff"/><path d="M3.2 13.8 A7.5 7.5 0 0 1 13.8 3.2" stroke="#808080" stroke-width="1.3" fill="none"/><path d="M4.1 12.9 A6.2 6.2 0 0 1 12.9 4.1" stroke="#404040" stroke-width="1.3" fill="none"/><path d="M13.8 3.2 A7.5 7.5 0 0 1 3.2 13.8" stroke="#fff" stroke-width="1.3" fill="none"/><path d="M12.9 4.1 A6.2 6.2 0 0 1 4.1 12.9" stroke="#d4d0c8" stroke-width="1.3" fill="none"/></svg>
<span class="t" style="left:1049.40px;top:427.03px;font-size:16.50px;font-family:'Liberation Sans', sans-serif;color:#000;transform:scale(0.8700,1.0000);">Да</span>
<span class="t" style="left:1107.30px;top:427.03px;font-size:16.50px;font-family:'Liberation Sans', sans-serif;color:#000;transform:scale(0.8700,1.0000);">Нет</span>
<span class="t" style="left:1025.00px;top:474.53px;font-size:16.50px;font-family:'Liberation Sans', sans-serif;color:#000;transform:scale(0.8991,1.0000);">Норматив</span>
<span class="t" style="left:1025.00px;top:492.03px;font-size:16.50px;font-family:'Liberation Sans', sans-serif;color:#000;transform:scale(0.8383,1.0000);">(не более):</span>
<span class="t" style="left:1123.70px;top:474.53px;font-size:16.50px;font-family:'Liberation Sans', sans-serif;color:#000;transform:scale(0.9101,1.0000);">Результат</span>
<span class="t" style="left:1121.00px;top:492.03px;font-size:16.50px;font-family:'Liberation Sans', sans-serif;color:#000;transform:scale(0.8851,1.0000);">измерений:</span>
<span class="t" style="left:783.30px;top:517.73px;font-size:16.50px;font-family:'Liberation Sans', sans-serif;color:#000;transform:scale(0.8938,1.0000);">Угол отклонения (КГО), град.:</span>
<span class="t" style="left:783.30px;top:544.83px;font-size:16.50px;font-family:'Liberation Sans', sans-serif;color:#000;transform:scale(0.8655,1.0000);">Величина второго рефлекса, %:</span>
<span class="t" style="left:783.30px;top:570.93px;font-size:16.50px;font-family:'Liberation Sans', sans-serif;color:#000;transform:scale(0.8866,1.0000);">Ширина рефлекса ( σ ), град.:</span>
<span class="t" style="left:783.30px;top:603.23px;font-size:16.50px;font-family:'Liberation Sans', sans-serif;font-weight:bold;color:#000;transform:scale(0.9761,1.0000);">Образец соответствует нормативам.</span>
<div style="position:absolute;left:1030.40px;top:515.40px;width:61.60px;height:23.40px;background:#fff;box-shadow:inset 1.3px 1.3px 0 #808080, inset 2.6px 2.6px 0 #404040, inset -1.3px -1.3px 0 #fff, inset -2.6px -2.6px 0 #d4d0c8"></div>
<span class="t" style="left:1056.22px;top:518.63px;font-size:16.50px;font-family:'Liberation Sans', sans-serif;color:#000;transform:scale(0.8700,1.0000);">55</span>
<div style="position:absolute;left:1131.00px;top:515.40px;width:62.00px;height:23.40px;background:#d4d0c8;box-shadow:inset 1.3px 1.3px 0 #808080, inset 2.6px 2.6px 0 #404040, inset -1.3px -1.3px 0 #fff, inset -2.6px -2.6px 0 #d4d0c8"></div>
<span class="t" style="left:1144.84px;top:517.63px;font-size:16.50px;font-family:'Liberation Sans', sans-serif;color:#000;transform:scale(0.8700,1.0000);">53.79</span>
<div style="position:absolute;left:1030.40px;top:542.00px;width:61.60px;height:23.40px;background:#fff;box-shadow:inset 1.3px 1.3px 0 #808080, inset 2.6px 2.6px 0 #404040, inset -1.3px -1.3px 0 #fff, inset -2.6px -2.6px 0 #d4d0c8"></div>
<span class="t" style="left:1056.22px;top:545.23px;font-size:16.50px;font-family:'Liberation Sans', sans-serif;color:#000;transform:scale(0.8700,1.0000);">90</span>
<div style="position:absolute;left:1131.00px;top:542.00px;width:62.00px;height:23.40px;background:#d4d0c8;box-shadow:inset 1.3px 1.3px 0 #808080, inset 2.6px 2.6px 0 #404040, inset -1.3px -1.3px 0 #fff, inset -2.6px -2.6px 0 #d4d0c8"></div>
<span class="t" style="left:1148.83px;top:544.23px;font-size:16.50px;font-family:'Liberation Sans', sans-serif;color:#000;transform:scale(0.8700,1.0000);">90.0</span>
<div style="position:absolute;left:1030.40px;top:568.60px;width:61.60px;height:23.40px;background:#fff;box-shadow:inset 1.3px 1.3px 0 #808080, inset 2.6px 2.6px 0 #404040, inset -1.3px -1.3px 0 #fff, inset -2.6px -2.6px 0 #d4d0c8"></div>
<span class="t" style="left:1056.22px;top:571.83px;font-size:16.50px;font-family:'Liberation Sans', sans-serif;color:#000;transform:scale(0.8700,1.0000);">10</span>
<div style="position:absolute;left:1131.00px;top:568.60px;width:62.00px;height:23.40px;background:#d4d0c8;box-shadow:inset 1.3px 1.3px 0 #808080, inset 2.6px 2.6px 0 #404040, inset -1.3px -1.3px 0 #fff, inset -2.6px -2.6px 0 #d4d0c8"></div>
<span class="t" style="left:1148.83px;top:570.83px;font-size:16.50px;font-family:'Liberation Sans', sans-serif;color:#000;transform:scale(0.8700,1.0000);">1.21</span>
<div style="position:absolute;left:1.70px;top:666.80px;width:1205.70px;height:1.40px;background:#808080"></div>
<div style="position:absolute;left:1.70px;top:668.20px;width:1205.00px;height:1.40px;background:#404040"></div>
<div style="position:absolute;left:1.70px;top:666.80px;width:1.20px;height:30.00px;background:#808080"></div>
<div style="position:absolute;left:2.90px;top:668.20px;width:1.30px;height:28.00px;background:#404040"></div>
<div style="position:absolute;left:1.70px;top:695.90px;width:1208.00px;height:1.70px;background:#fff"></div>
<div style="position:absolute;left:0.00px;top:697.60px;width:1212.00px;height:2.40px;background:#a5a29c"></div>
<div style="position:absolute;left:4.30px;top:669.60px;width:37.00px;height:26.00px;background:#d8d5ce"></div>
<div style="position:absolute;left:101.00px;top:669.60px;width:41.00px;height:26.00px;background:#d8d5ce"></div>
<div style="position:absolute;left:202.00px;top:669.60px;width:44.50px;height:26.00px;background:#d8d5ce"></div>
<div style="position:absolute;left:42.10px;top:669.60px;width:58.70px;height:24.70px;border:1.9px solid #000;box-sizing:border-box"></div>
<span class="t" style="left:54.99px;top:672.23px;font-size:16.50px;font-family:'Liberation Sans', sans-serif;color:#000;transform:scale(0.8700,1.0000);">53.52</span>
<div style="position:absolute;left:142.50px;top:669.60px;width:59.20px;height:24.70px;border:1.9px solid #000;box-sizing:border-box"></div>
<span class="t" style="left:151.65px;top:672.23px;font-size:16.50px;font-family:'Liberation Sans', sans-serif;color:#000;transform:scale(0.8700,1.0000);">206.81</span>
<div style="position:absolute;left:246.70px;top:669.60px;width:67.00px;height:24.70px;border:1.9px solid #000;box-sizing:border-box"></div>
<span class="t" style="left:267.73px;top:672.23px;font-size:16.50px;font-family:'Liberation Sans', sans-serif;color:#000;transform:scale(0.8700,1.0000);">81.7</span>
<span class="t" style="left:11.80px;top:672.61px;font-size:17.00px;font-family:'Liberation Sans', sans-serif;color:#000;transform:scale(1.0310,1.0000);">χ</span>
<span class="t" style="left:26.80px;top:673.11px;font-size:17.00px;font-family:'Liberation Sans', sans-serif;color:#000;transform:scale(0.7555,1.0000);">=</span>
<span class="t" style="left:108.50px;top:671.61px;font-size:17.00px;font-family:'Liberation Sans', sans-serif;color:#000;transform:scale(1.0432,1.0000);">φ</span>
<span class="t" style="left:126.50px;top:673.11px;font-size:17.00px;font-family:'Liberation Sans', sans-serif;color:#000;transform:scale(0.7555,1.0000);">=</span>
<span class="t" style="left:219.00px;top:673.97px;font-size:17.00px;font-family:'Liberation Mono', monospace;color:#000;transform:scale(0.8000,1.0000);">I</span>
<span class="t" style="left:229.00px;top:673.11px;font-size:17.00px;font-family:'Liberation Sans', sans-serif;color:#000;transform:scale(0.7555,1.0000);">=</span>
<div style="position:absolute;left:346.90px;top:672.00px;width:33.30px;height:23.90px;box-shadow:inset 1.8px 1.5px 0 #fff, inset -1.8px 0 0 #404040"></div>
<div style="position:absolute;left:381.40px;top:672.00px;width:33.20px;height:23.90px;box-shadow:inset 1.8px 1.5px 0 #fff, inset -1.8px 0 0 #404040"></div>
<div style="position:absolute;left:415.70px;top:672.00px;width:33.30px;height:23.90px;box-shadow:inset 1.8px 1.5px 0 #fff, inset -1.8px 0 0 #404040"></div>
<div style="position:absolute;left:485.00px;top:672.00px;width:33.60px;height:23.90px;box-shadow:inset 1.8px 1.5px 0 #fff, inset -1.8px 0 0 #404040"></div>
<div style="position:absolute;left:518.90px;top:672.00px;width:31.70px;height:23.90px;box-shadow:inset 0 1.5px 0 #fff, inset -1.8px 0 0 #404040"></div>
<div style="position:absolute;left:551.00px;top:672.00px;width:33.80px;height:23.90px;box-shadow:inset 1.8px 1.5px 0 #fff, inset -1.8px 0 0 #404040"></div>
<span class="t" style="left:356.20px;top:675.32px;font-size:15.00px;font-family:'Liberation Serif', serif;font-weight:bold;color:#fff;transform:scale(0.9002,1.2000);-webkit-text-stroke:0.5px #fff">1:1</span>
<span class="t" style="left:354.90px;top:674.12px;font-size:15.00px;font-family:'Liberation Serif', serif;font-weight:bold;color:#808080;transform:scale(0.9002,1.2000);-webkit-text-stroke:0.5px #808080">1:1</span>
<svg style="left:0;top:0" width="1212" height="700"><defs><pattern id="dz" width="2.667" height="2.667" patternUnits="userSpaceOnUse" x="387" y="674.2"><rect width="2.667" height="2.667" fill="#000078"/><rect width="1.333" height="1.333" fill="#0000e8"/><rect x="1.333" y="1.333" width="1.333" height="1.333" fill="#0000e8"/></pattern></defs><rect x="386.97" y="674.16" width="21.56" height="20.63" fill="url(#dz)"/><rect x="389.95" y="676.58" width="15.80" height="1.67" fill="#fff"/><rect x="389.95" y="689.59" width="16.06" height="1.93" fill="#fff"/><rect x="389.95" y="681.78" width="1.49" height="7.81" fill="#fff"/><polygon points="406.01,681.22 406.01,689.59 402.14,689.59" fill="#fff"/><rect x="393.96" y="679.92" width="1.26" height="3.72" fill="#fff"/><rect x="399.17" y="679.92" width="1.26" height="3.72" fill="#fff"/><rect x="395.15" y="686.61" width="1.34" height="2.97" fill="#fff"/><rect x="421.35" y="674.16" width="21.56" height="20.63" fill="url(#dz)"/><rect x="423.95" y="676.13" width="1.67" height="1.12" fill="#fff"/><rect x="423.95" y="679.18" width="1.67" height="1.49" fill="#fff"/><rect x="423.95" y="683.08" width="1.67" height="1.49" fill="#fff"/><rect x="423.95" y="686.99" width="1.67" height="1.49" fill="#fff"/><rect x="423.95" y="690.70" width="1.67" height="1.34" fill="#fff"/><rect x="427.29" y="690.70" width="1.86" height="1.34" fill="#fff"/><rect x="431.20" y="690.70" width="1.86" height="1.34" fill="#fff"/><rect x="435.10" y="690.70" width="1.86" height="1.34" fill="#fff"/><rect x="439.00" y="690.70" width="1.30" height="1.34" fill="#fff"/><rect x="427.11" y="676.20" width="1.15" height="12.64" fill="#fff"/><rect x="427.11" y="687.73" width="13.20" height="1.12" fill="#fff"/><rect x="429.90" y="676.20" width="10.41" height="9.67" fill="#e4e4fa"/><polygon points="430.45,676.95 439.93,676.95 437.33,684.75 431.38,684.75" fill="#0000b0"/><rect x="432.68" y="677.88" width="0.93" height="2.79" fill="#a0a0f0"/><rect x="435.47" y="677.88" width="0.93" height="2.79" fill="#a0a0f0"/><rect x="433.80" y="682.90" width="0.93" height="1.86" fill="#c0c0f8"/><rect x="429.90" y="685.68" width="10.41" height="1.12" fill="#6060d0"/></svg>
<div style="position:absolute;left:451.20px;top:672.00px;width:32.70px;height:22.40px;border:1.6px solid #100000;box-sizing:border-box;background:#dbd8d1;box-shadow:inset 1.2px 1.2px 0 #fff, inset -1.3px -1.3px 0 #808080"></div>
<svg style="left:446px;top:668px" width="74" height="32" viewBox="446 668 74 32">
<rect x="456.8" y="677.6" width="21.8" height="13.6" rx="3" fill="none" stroke="#000" stroke-width="1.5" stroke-dasharray="1.3 1.4"/>
<path d="M458 691 L468.5 680.5" stroke="#800000" stroke-width="2.0"/>
<path d="M458.5 690.5 L468.5 680.5" stroke="#400000" stroke-width="0.8" stroke-dasharray="1 1"/>
<rect x="456.4" y="689.8" width="2.4" height="2.4" fill="#00c0c0"/>
<path d="M463.5 676.6 L470 676.2 L476 679 L475.6 684 L472 684.6 L470.6 681 L467 680.6 L466.4 677.8 Z" fill="#000"/>
<path d="M466.2 676.4 L468.6 676.4 L468 678 Z M468.8 677.6 L474.4 679.2 L472.4 681 L469.4 680 Z M472.4 681.4 L475 680.8 L474.2 683.6 L472.2 683.8 Z" fill="#a0a000"/>
<rect x="469.2" y="677.2" width="2" height="1.4" fill="#4040c0"/>
<path d="M491.8 689.7 H509.4 M491.8 689.7 L508 674.3" stroke="#000" stroke-width="1.4" fill="none"/>
<path d="M499.6 682 Q504 683.4 505 689.2 M501 681 Q506.4 682.6 508.2 689.2" stroke="#000" stroke-width="1.1" fill="none"/>
</svg>
<svg style="left:514px;top:668px" width="74" height="32" viewBox="514 668 74 32">
<path d="M525.6 675 L544 675 L534.6 692.4 Z" fill="#fff"/>
<path d="M524.8 674.4 L543 674.4 L533.8 692.2 Z" fill="#ff0000"/>
<path d="M559.6 681 L559.6 688 L566.8 688 Z" fill="#000080"/>
<path d="M563.4 684.4 Q567.6 679.2 572.6 680.6 Q577 682.6 575.2 686.8 L573.6 689.2" stroke="#000080" stroke-width="1.5" fill="none"/>
</svg>
</div></body></html>
